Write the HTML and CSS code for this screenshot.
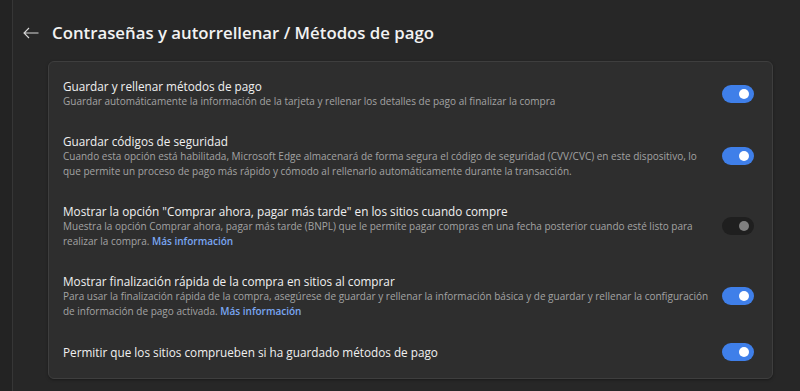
FILE: index.html
```html
<!DOCTYPE html>
<html lang="es">
<head>
    <meta charset="UTF-8">
    <title>Métodos de pago</title>
    <link rel="stylesheet" href="styles.css">
</head>
<body>
    <div class="lateral"></div>
    <div class="contenido">
        <div class="cabecera">
            <svg class="volver" width="16" height="12" viewBox="0 0 16 12">
                <path d="M15.5 6H1 M6 1L1 6L6 11" fill="none" stroke="#d8d8d8" stroke-width="1.1"/>
            </svg>
            <h1>Contraseñas y autorrellenar / Métodos de pago</h1>
        </div>

        <div class="tarjeta">
            <div class="fila">
                <div class="textos">
                    <div class="titulo">Guardar y rellenar métodos de pago</div>
                    <div class="descripcion">Guardar automáticamente la información de la tarjeta y rellenar los detalles de pago al finalizar la compra</div>
                </div>
                <span class="interruptor activo"></span>
            </div>

            <div class="fila">
                <div class="textos">
                    <div class="titulo">Guardar códigos de seguridad</div>
                    <div class="descripcion">Cuando esta opción está habilitada, Microsoft Edge almacenará de forma segura el código de seguridad (CVV/CVC) en este dispositivo, lo<br>que permite un proceso de pago más rápido y cómodo al rellenarlo automáticamente durante la transacción.</div>
                </div>
                <span class="interruptor activo"></span>
            </div>

            <div class="fila">
                <div class="textos">
                    <div class="titulo">Mostrar la opción "Comprar ahora, pagar más tarde" en los sitios cuando compre</div>
                    <div class="descripcion">Muestra la opción Comprar ahora, pagar más tarde (BNPL) que le permite pagar compras en una fecha posterior cuando esté listo para<br>realizar la compra. <a href="#">Más información</a></div>
                </div>
                <span class="interruptor"></span>
            </div>

            <div class="fila">
                <div class="textos">
                    <div class="titulo">Mostrar finalización rápida de la compra en sitios al comprar</div>
                    <div class="descripcion">Para usar la finalización rápida de la compra, asegúrese de guardar y rellenar la información básica y de guardar y rellenar la configuración<br>de información de pago activada. <a href="#">Más información</a></div>
                </div>
                <span class="interruptor activo"></span>
            </div>

            <div class="fila ultima">
                <div class="textos">
                    <div class="titulo">Permitir que los sitios comprueben si ha guardado métodos de pago</div>
                </div>
                <span class="interruptor activo"></span>
            </div>
        </div>
    </div>
</body>
</html>
```

FILE: styles.css
```css
body{
    margin: 0;
    height: 391px;
    overflow: hidden;
    background-color: #272727;
    font-family: "Open Sans", "Noto Sans", sans-serif;
    display: flex;
}
.lateral{
    width: 12px;
    background-color: #232323;
    border-right: 1px solid #363636;
}
.contenido{
    flex: 1;
    padding: 0 27px 0 35px;
}
.cabecera{
    display: flex;
    align-items: center;
    height: 57px;
    padding-top: 4px;
}
.volver{
    margin-left: -25px;
    margin-right: 13px;
}
h1{
    margin: 0;
    color: #f2f2f2;
    font-size: 16.8px;
    font-weight: 600;
}
.tarjeta{
    background-color: #2e2e2e;
    border: 1px solid #3e3e3e;
    border-radius: 6px;
    box-shadow: 0 1px 3px rgba(0,0,0,0.35);
    padding: 4px 0 5px;
}
.fila{
    display: flex;
    align-items: center;
    padding: 12px 18px 12px 14px;
}
.textos{
    flex: 1;
}
.titulo{
    color: #f0f0f0;
    font-size: 11.75px;
    line-height: 16px;
}
.descripcion{
    color: #a3a3a3;
    font-size: 10px;
    line-height: 15px;
    white-space: nowrap;
}
.descripcion a{
    color: #79a6f2;
    font-weight: 600;
    text-decoration: none;
}
.interruptor{
    position: relative;
    width: 32px;
    height: 18px;
    border-radius: 9px;
    background-color: #1f1f1f;
    flex-shrink: 0;
}
.interruptor::after{
    content: "";
    position: absolute;
    right: 5px;
    top: 4px;
    width: 10px;
    height: 10px;
    border-radius: 50%;
    background-color: #808080;
}
.interruptor.activo{
    background-color: #3f7fe9;
}
.interruptor.activo::after{
    background-color: #ffffff;
}
```
